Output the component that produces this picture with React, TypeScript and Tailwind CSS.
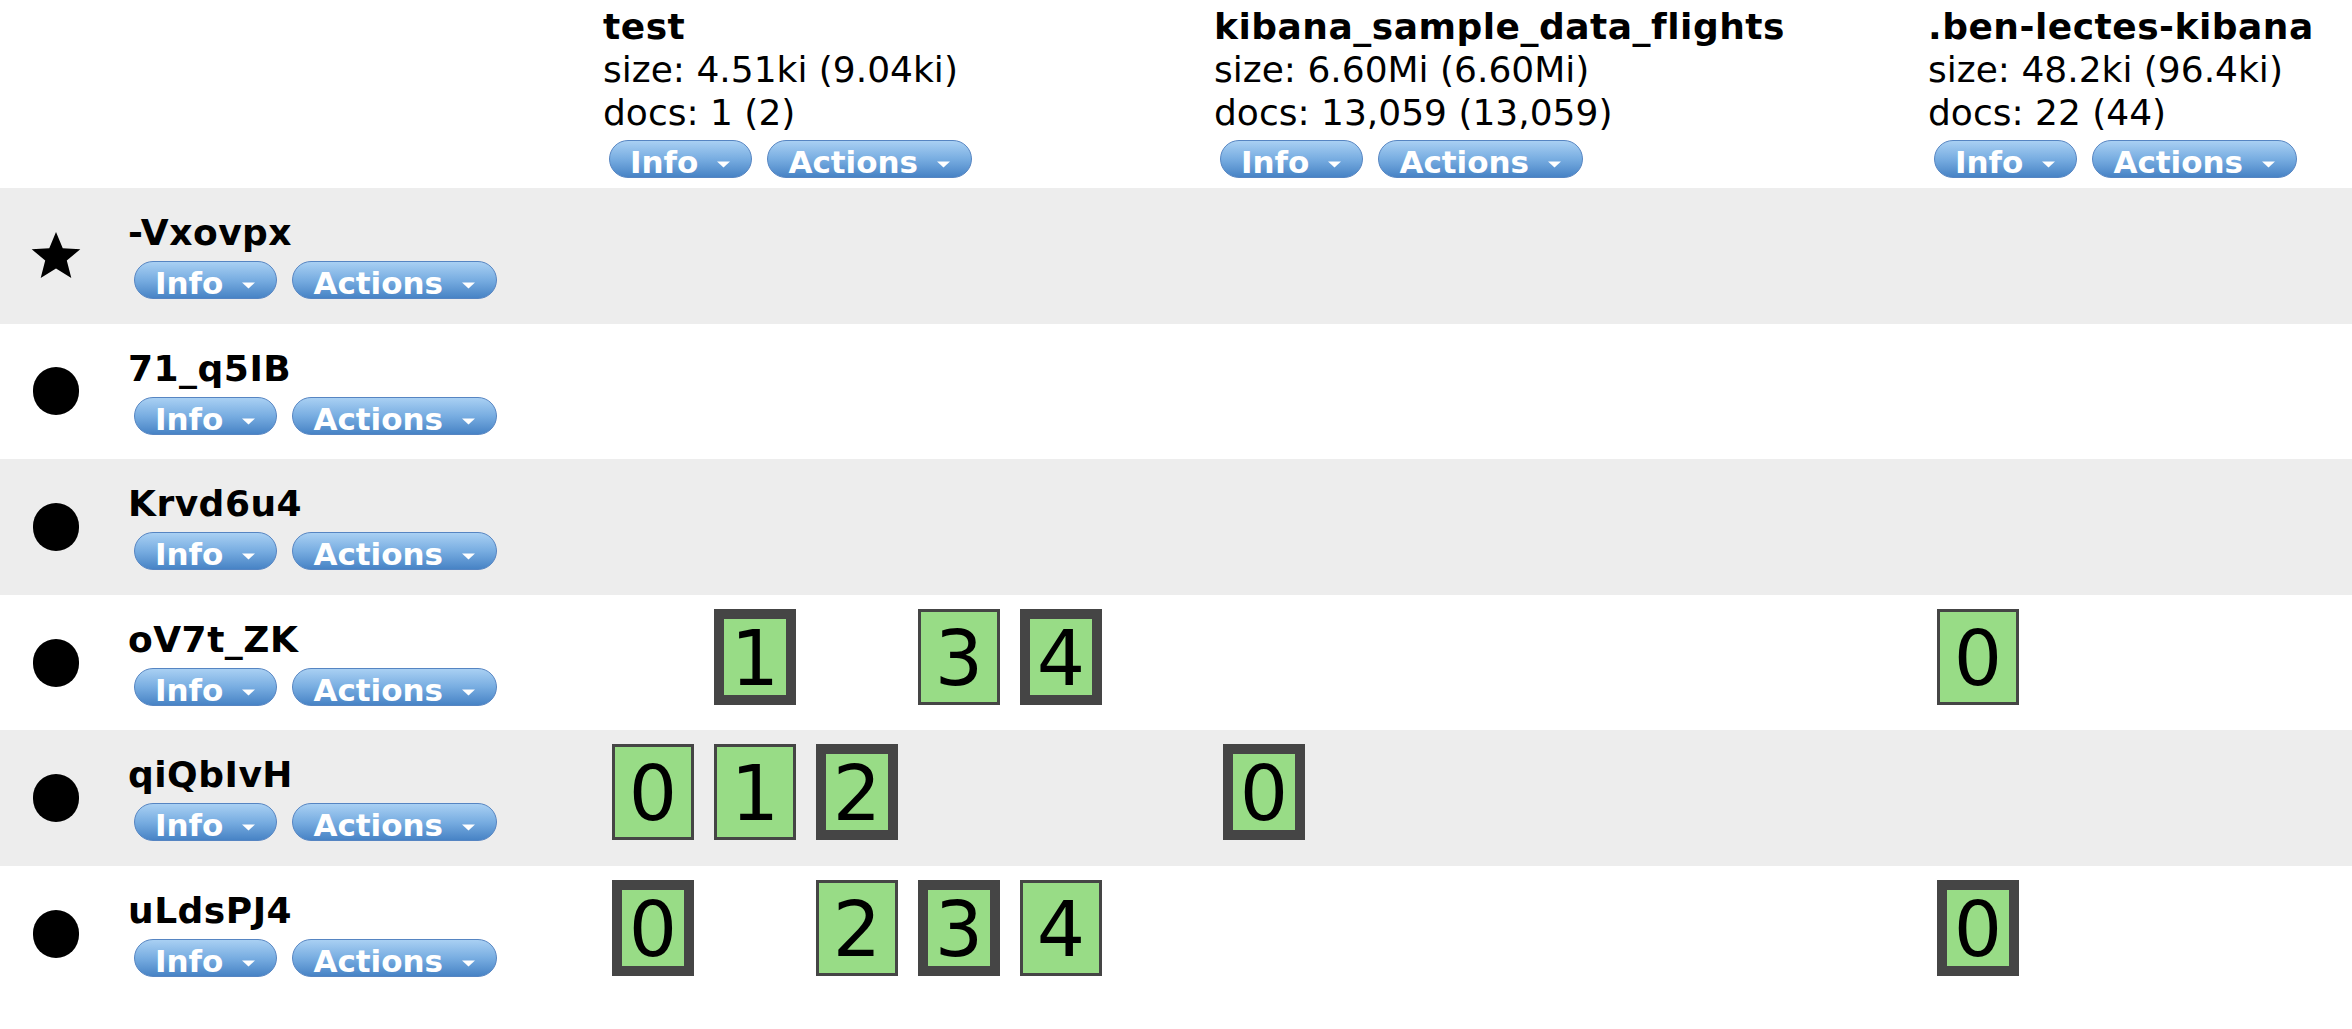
import React from "react"

type Shard = { n: number; primary: boolean } | null

interface IndexCol {
  name: string
  size: string
  docs: string
  width: string
}

interface NodeRow {
  name: string
  master?: boolean
  shards: Shard[][]
}

const indices: IndexCol[] = [
  { name: "test", size: "size: 4.51ki (9.04ki)", docs: "docs: 1 (2)", width: "w-[611px]" },
  { name: "kibana_sample_data_flights", size: "size: 6.60Mi (6.60Mi)", docs: "docs: 13,059 (13,059)", width: "w-[714px]" },
  { name: ".ben-lectes-kibana", size: "size: 48.2ki (96.4ki)", docs: "docs: 22 (44)", width: "flex-1" },
]

const P = (n: number): Shard => ({ n, primary: true })
const R = (n: number): Shard => ({ n, primary: false })

const nodes: NodeRow[] = [
  { name: "-Vxovpx", master: true, shards: [[], [], []] },
  { name: "71_q5IB", shards: [[], [], []] },
  { name: "Krvd6u4", shards: [[], [], []] },
  { name: "oV7t_ZK", shards: [[null, P(1), null, R(3), P(4)], [], [R(0)]] },
  { name: "qiQbIvH", shards: [[R(0), R(1), P(2)], [P(0)], []] },
  { name: "uLdsPJ4", shards: [[P(0), null, R(2), P(3), R(4)], [], [P(0)]] },
]

function Caret() {
  return (
    <svg width="15" height="7" viewBox="0 0 15 7" className="ml-[18px] mt-[20px] shrink-0">
      <polygon points="1,0.5 14,0.5 7.5,6.5" fill="#ffffff" />
    </svg>
  )
}

function PillButton({ label }: { label: string }) {
  return (
    <div className="flex h-[38px] items-start rounded-full border border-[#5685c2] bg-linear-to-b from-[#a9d0f3] via-[#78ade1] to-[#4783c5] px-[20px]">
      <span className="mt-[6px] text-[31px] font-bold leading-[31px] text-white">{label}</span>
      <Caret />
    </div>
  )
}

function ButtonPair() {
  return (
    <div className="ml-[6px] flex gap-[15px]">
      <PillButton label="Info" />
      <PillButton label="Actions" />
    </div>
  )
}

function ShardBox({ shard }: { shard: Shard }) {
  if (!shard) return <div className="h-[96px] w-[82px] shrink-0" />
  return (
    <div
      className={
        "flex h-[96px] w-[82px] shrink-0 items-center justify-center border-[#454545] bg-[#98dc86] pt-[4px] text-[76px] leading-none text-black " +
        (shard.primary ? "border-[10px]" : "border-[3px]")
      }
    >
      {shard.n}
    </div>
  )
}

function Star() {
  return (
    <svg width="54" height="52" viewBox="0 0 24 23">
      <polygon
        points="12,0.8 15,8 22.8,8.5 16.8,13.5 18.8,21.3 12,17 5.2,21.3 7.2,13.5 1.2,8.5 9,8"
        fill="#000"
      />
    </svg>
  )
}

export default function App() {
  return (
    <div className="min-h-screen w-full bg-white font-['DejaVu_Sans',Verdana,sans-serif] text-black">
      {/* index headers */}
      <div className="flex h-[188px]">
        <div className="w-[128px] shrink-0" />
        <div className="w-[475px] shrink-0" />
        {indices.map((ix) => (
          <div key={ix.name} className={ix.width + " shrink-0 pt-[5px]"}>
            <div className="text-[36px] font-bold leading-[43px] tracking-[0.5px] whitespace-nowrap">{ix.name}</div>
            <div className="text-[36px] leading-[43px] whitespace-nowrap">{ix.size}</div>
            <div className="text-[36px] leading-[43px] whitespace-nowrap">{ix.docs}</div>
            <div className="mt-[6px]">
              <ButtonPair />
            </div>
          </div>
        ))}
      </div>

      {/* nodes */}
      {nodes.map((node, i) => (
        <div
          key={node.name}
          className={"flex h-[135.6px] " + (i % 2 === 0 ? "bg-[#ededed]" : "bg-white")}
        >
          <div className="flex w-[128px] shrink-0 items-center pl-[29px]">
            {node.master ? <Star /> : <div className="ml-[4px] h-[48px] w-[46px] rounded-full bg-black" />}
          </div>
          <div className="w-[475px] shrink-0 pt-[23px]">
            <div className="text-[36px] font-bold leading-[43px] tracking-[0.5px] whitespace-nowrap">{node.name}</div>
            <div className="mt-[7px]">
              <ButtonPair />
            </div>
          </div>
          {indices.map((ix, c) => (
            <div key={ix.name} className={ix.width + " flex shrink-0 gap-[20px] pl-[9px] pt-[14px]"}>
              {node.shards[c].map((s, k) => (
                <ShardBox key={k} shard={s} />
              ))}
            </div>
          ))}
        </div>
      ))}
    </div>
  )
}
